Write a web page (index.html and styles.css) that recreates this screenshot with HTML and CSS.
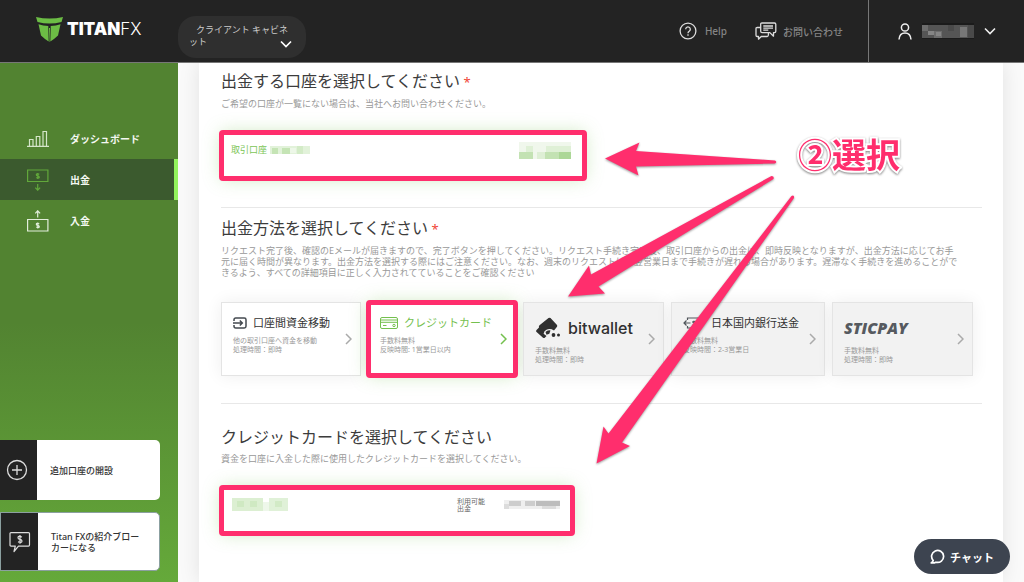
FILE: index.html
```html
<!DOCTYPE html>
<html lang="ja">
<head>
<meta charset="utf-8">
<meta name="viewport" content="width=device-width, initial-scale=1">
<title>Titan FX - 出金</title>
<link rel="stylesheet" href="styles.css">
</head>
<body>
<header class="topbar">
  <a class="logo" href="#" aria-label="Titan FX">
    <svg class="logo-mark" viewBox="0 0 27 25" width="27" height="25" fill="#6cbd45" aria-hidden="true">
      <path d="M0 0Q13.500 3 27 0L25.500 5Q13.500 8 1.500 5Z"/>
      <path d="M2.500 7.300Q7 8.800 12.300 9V11L12.700 24.500Q8 21.500 5 18.500Z"/>
      <path d="M24.500 7.300Q20 8.800 14.700 9V11L14.300 24.500Q19 21.500 22 18.500Z"/>
      <path d="M13 11h1l-.3 14h-.4Z"/>
    </svg>
    <span class="logo-text"><b>TITAN</b>FX</span>
  </a>
  <button class="cabinet" type="button" aria-haspopup="menu">
    <span>クライアント キャビネット</span>
    <svg viewBox="0 0 12 8" width="12" height="8" fill="none" stroke="#fff" stroke-width="1.700" aria-hidden="true"><path d="M1 1.500l5 5 5-5"/></svg>
  </button>
  <nav class="toplinks" aria-label="サポート">
    <a class="toplink" href="#">
      <svg viewBox="0 0 18 18" width="18" height="18" fill="none" stroke="#ddd" stroke-width="1.300" aria-hidden="true"><circle cx="9" cy="9" r="7.900"/><path d="M6.700 7.200a2.300 2.300 0 1 1 3.500 2c-.8.500-1.200.9-1.200 2"/><path d="M9 12.300v1.500"/></svg>
      <span>Help</span>
    </a>
    <a class="toplink contact" href="#">
      <svg viewBox="0 0 22 18" width="22" height="18" fill="none" stroke="#ddd" stroke-width="1.300" stroke-linejoin="round" aria-hidden="true"><path d="M7 1h12.500q1.300 0 1.300 1.300v7q0 1.300-1.300 1.300h-1v3.600l-3.600-3.600H7q-1.300 0-1.300-1.300v-7Q5.700 1 7 1Z"/><path d="M8.300 4h9.700M8.300 6.200h9.700M8.300 8.200h5"/><path d="M5.500 5.500H2.200Q1 5.500 1 6.700v6.600q0 1.200 1.200 1.200h1.300v2.700l2.700-2.700h6q1 0 1.200-1.500v-2.300"/></svg>
      <span>お問い合わせ</span>
    </a>
  </nav>
  <button class="user" type="button" aria-haspopup="menu" aria-label="アカウントメニュー">
    <svg viewBox="0 0 14 17" width="14" height="17" fill="none" stroke="#eee" stroke-width="1.500" aria-hidden="true"><circle cx="7" cy="4.500" r="3.600"/><path d="M1 16.500c.3-4.600 2.500-6.600 6-6.600s5.700 2 6 6.600"/></svg>
    <svg class="user-name" viewBox="0 0 52 16" width="52" height="16" aria-hidden="true">
      <rect width="52" height="16" fill="#1b1b1b"/><rect y="2" width="52" height="13" fill="#555"/>
      <path fill="#6d6d6d" d="M0 2h6v6H0zM12 8h8v7h-8z"/><path fill="#858585" d="M6 8h6v4H6zM14 9h5v4h-5z"/><path fill="#777" d="M38 4h7v10h-7z"/><path fill="#4a4a4a" d="M26 2h6v6h-6zM46 2h6v13h-6z"/>
    </svg>
    <svg viewBox="0 0 12 8" width="12" height="8" fill="none" stroke="#eee" stroke-width="1.600" aria-hidden="true"><path d="M1 1.500l5 5 5-5"/></svg>
  </button>
</header>

<div class="page">
  <aside class="sidebar">
    <nav class="menu" aria-label="メインメニュー">
      <a class="menu-item" href="#">
        <svg viewBox="0 0 22 22" width="22" height="22" fill="none" stroke="#d5e6c9" stroke-width="1.200" aria-hidden="true"><path d="M0 18.400h22M2.500 18v-6.500h3.500V18M9.300 18V8.500h3.500V18M16 18V3.500h3.500V18"/></svg>
        <span>ダッシュボード</span>
      </a>
      <a class="menu-item active" href="#" aria-current="page">
        <svg viewBox="0 0 22 22" width="22" height="22" fill="none" stroke="#62a83b" stroke-width="1.200" aria-hidden="true"><path d="M.6 1h20.300v11.500H.6zM10.700 15v6M8.300 18.600l2.400 2.600 2.400-2.600"/><path d="M12.300 5.200q-3-1-3 .5 0 1 1.500 1.200 1.500.3 1.500 1.300 0 1.200-3 .5M10.800 4v6"/></svg>
        <span>出金</span>
      </a>
      <a class="menu-item" href="#">
        <svg viewBox="0 0 22 22" width="22" height="22" fill="none" stroke="#e2eedb" stroke-width="1.200" aria-hidden="true"><path d="M.6 9.500h20.300V21H.6zM10.700 7.500V1M8.300 3.400l2.400-2.600 2.400 2.600"/><path d="M12.300 13.700q-3-1-3 .5 0 1 1.500 1.200 1.500.3 1.500 1.300 0 1.200-3 .5M10.800 12.500v6"/></svg>
        <span>入金</span>
      </a>
    </nav>
    <div class="shortcuts">
      <a class="shortcut" href="#">
        <span class="shortcut-icon"><svg viewBox="0 0 22 22" width="22" height="22" fill="none" stroke="#ddd" stroke-width="1.300" aria-hidden="true"><circle cx="11" cy="11" r="9.500"/><path d="M11 6v10M6 11h10"/></svg></span>
        <span class="shortcut-label">追加口座の開設</span>
      </a>
      <a class="shortcut outlined" href="#">
        <span class="shortcut-icon"><svg viewBox="0 0 22 22" width="22" height="22" fill="none" stroke="#ddd" stroke-width="1.200" stroke-linejoin="round" aria-hidden="true"><path d="M2 1.600h17.500q1 0 1 1v11.500q0 1-1 1H9.500L5 20.500l1.300-5.400H2q-1 0-1-1V2.600q0-1 1-1Z"/><path d="M13 6q-4-1.500-4 .7 0 1.300 2 1.700 2 .4 2 1.700 0 2-4 .8M11 4v8.800"/></svg></span>
        <span class="shortcut-label">Titan FXの紹介ブローカーになる</span>
      </a>
    </div>
  </aside>

  <main class="content">
    <div class="sheet">
      <section class="step">
        <h2>出金する口座を選択してください<span class="req"> *</span></h2>
        <p class="hint">ご希望の口座が一覧にない場合は、当社へお問い合わせください。</p>
        <button class="field marked" type="button">
          <span class="account">取引口座
            <svg viewBox="0 0 40 10" width="40" height="10" aria-hidden="true"><path fill="#e2f2da" d="M0 1h40v8H0z"/><path fill="#c5e4b5" d="M2 3h6v6H2zM12 3h8v6h-8z"/><path fill="#d3ebc7" d="M27 1h6v8h-6z"/><path fill="#edf7e8" d="M20 3h6v5h-6z"/></svg>
          </span>
          <svg class="balance" viewBox="0 0 52 17" width="52" height="17" aria-hidden="true"><path fill="#f0f7ec" d="M0 0h52v17H0z"/><path fill="#dff0d6" d="M7 4h7v6H7zM27 4h25v6H27z"/><path fill="#c3e2b3" d="M0 10h14v7H0zM26 10h14v7H26z"/><path fill="#acd797" d="M40 10h12v7H40z"/><path fill="#deefd5" d="M18 10h8v7h-8z"/></svg>
        </button>
      </section>

      <section class="step">
        <h2>出金方法を選択してください<span class="req"> *</span></h2>
        <p class="notice">リクエスト完了後、確認のEメールが届きますので、完了ボタンを押してください。リクエスト手続き完了後、取引口座からの出金は、即時反映となりますが、出金方法に応じてお手<br>元に届く時間が異なります。出金方法を選択する際にはご注意ください。なお、週末のリクエストは、翌営業日まで手続きが遅れる場合があります。遅滞なく手続きを進めることがで<br>きるよう、すべての詳細項目に正しく入力されてていることをご確認ください</p>
        <div class="methods">
          <button class="method" type="button">
            <span class="method-body">
              <span class="method-title">
                <svg viewBox="0 0 14 12" width="14" height="12" fill="none" stroke="#444a50" stroke-width="1.500" aria-hidden="true"><path d="M1 4V2.700Q1 1 2.700 1h8.600Q13 1 13 2.700v6.600q0 1.700-1.700 1.700H2.700Q1 11 1 9.300V8M0 6h9M6.800 3.500L9.300 6 6.800 8.500"/></svg>
                口座間資金移動
              </span>
              <span class="method-note">他の取引口座へ資金を移動<br>処理時間：即時</span>
            </span>
            <svg class="chev" viewBox="0 0 7 12" width="7" height="12" aria-hidden="true"><path d="M1 1l5 5-5 5"/></svg>
          </button>
          <button class="method selected marked" type="button" aria-pressed="true">
            <span class="method-body">
              <span class="method-title">
                <svg viewBox="0 0 18 12" width="18" height="12" fill="none" stroke="#74c04e" aria-hidden="true"><rect x=".5" y=".5" width="17" height="11" rx="1.500"/><path d="M1 3h16M1 5.300h16M3 8.500h3.500"/><circle cx="14" cy="8.500" r="1.200"/></svg>
                クレジットカード
              </span>
              <span class="method-note">手数料無料<br>反映時間: 1営業日以内</span>
            </span>
            <svg class="chev" viewBox="0 0 7 12" width="7" height="12" aria-hidden="true"><path d="M1 1l5 5-5 5"/></svg>
          </button>
          <button class="method muted" type="button">
            <span class="method-body">
              <span class="method-brand bitwallet">
                <svg viewBox="0 0 26 22" width="26" height="22" fill="#303030" aria-hidden="true"><path d="M13.500 1Q14.500.3 15.500 1L22 8Q22.500 9 22 9.800L19 13.500Q15 11 11.500 12.800 9 14 8.600 16.800L11.500 19 9.800 20.800Q9 21.300 8 20.700L1.300 14.800Q.7 14 1.500 13L4 10.500Q3.500 9 4.500 8.300Z"/><path d="M10.500 15q1.800-2.200 5-1.600l-1.200 3.300-2.800 1Z"/><circle cx="18.500" cy="18" r="1.900"/><circle cx="23.500" cy="18" r="1.500"/></svg>
                bitwallet
              </span>
              <span class="method-note">手数料無料<br>処理時間：即時</span>
            </span>
            <svg class="chev" viewBox="0 0 7 12" width="7" height="12" aria-hidden="true"><path d="M1 1l5 5-5 5"/></svg>
          </button>
          <button class="method muted" type="button">
            <span class="method-body">
              <span class="method-title bank">
                <svg viewBox="0 0 22 12" width="22" height="12" fill="none" stroke="#50555a" stroke-width="1.200" aria-hidden="true"><path d="M4.500 3V1h13v2M4.500 9v2h13V9M7.500 6H1M3.500 3.500L1 6l2.500 2.500M14.500 6H21M18.500 3.500L21 6l-2.500 2.500"/><path d="M12.200 4.500q-2.400-.6-2.400.4 0 .8 1.200 1 1.200.2 1.200 1 0 1.100-2.400.6"/></svg>
                日本国内銀行送金
              </span>
              <span class="method-note">手数料無料<br>反映時間：2-3営業日</span>
            </span>
            <svg class="chev" viewBox="0 0 7 12" width="7" height="12" aria-hidden="true"><path d="M1 1l5 5-5 5"/></svg>
          </button>
          <button class="method muted" type="button">
            <span class="method-body">
              <span class="method-brand sticpay">STICPAY</span>
              <span class="method-note">手数料無料<br>処理時間：即時</span>
            </span>
            <svg class="chev" viewBox="0 0 7 12" width="7" height="12" aria-hidden="true"><path d="M1 1l5 5-5 5"/></svg>
          </button>
        </div>
      </section>

      <section class="step card-step">
        <h2>クレジットカードを選択してください</h2>
        <p class="hint">資金を口座に入金した際に使用したクレジットカードを選択してください。</p>
        <button class="field card-field marked" type="button">
          <svg viewBox="0 0 57 13" width="57" height="13" aria-label="カード番号" role="img"><path fill="#dcefd2" d="M1 0h31v13H1z"/><path fill="#cfe9c2" d="M6 3h7v6H6zM19 3h7v6h-7z"/><path fill="#eef7ea" d="M32 4h8v9h-8z"/><path fill="#e0f1d8" d="M38 0h19v13H38z"/><path fill="#d2eac6" d="M44 3h7v6h-7z"/></svg>
          <span class="available">利用可能<br>出金</span>
          <svg viewBox="0 0 56 13" width="56" height="13" aria-hidden="true"><path fill="#efefef" d="M0 2h56v9H0z"/><path fill="#cdcdcd" d="M5 3h12v5H5zM21 3h10v5H21z"/><path fill="#bdbdbd" d="M32 3h24v5H32z"/><path fill="#dcdcdc" d="M0 6h5v5H0zM38 8h14v3H38z"/></svg>
        </button>
      </section>
    </div>
  </main>
</div>

<button class="chat" type="button">
  <svg viewBox="0 0 15 15" width="15" height="15" fill="none" stroke="#fff" stroke-width="1.700" stroke-linejoin="round" aria-hidden="true"><path d="M3.200 11.500A6 6 0 1 1 6 13.200Q4 14.200 1.200 13.900 2.800 13 3.200 11.500Z"/></svg>
  <span>チャット</span>
</button>

<svg class="arrows" viewBox="0 0 1024 582" width="1024" height="582" fill="#ff2e6d" aria-hidden="true">
  <path d="M605 158.500L639.500 142.500 636 151 775 160.500Q777.500 162 775 163.500L636 166.500 638.500 175.500Z"/>
  <path d="M568 296.500L589 265.500 591 274.500 771.500 176Q774.500 176 773.500 179L598.500 286.500 605 293.500Z"/>
  <path d="M596.500 463.500L603.500 426.500 608.500 433.500 791.500 196Q794.500 194.500 794 198L622 442.500 630 446Z"/>
</svg>
<p class="callout">②選択</p>
</body>
</html>
```
FILE: styles.css
```css
* {
  box-sizing: border-box;
}

body {
  margin: 0;
  min-height: 100vh;
  position: relative;
  display: flex;
  flex-direction: column;
  font-family: "Noto Sans", "Noto Sans CJK JP", sans-serif;
  font-size: 9px;
  color: #444;
}

button {
  margin: 0;
  padding: 0;
  border: 0;
  background: none;
  color: inherit;
  font: inherit;
  text-align: left;
  cursor: pointer;
}

a {
  color: inherit;
  text-decoration: none;
}

h2,
p {
  margin: 0;
}

svg {
  display: block;
  flex: none;
}

/* Top bar */

.topbar {
  height: 63px;
  display: flex;
  align-items: stretch;
  background: #232323;
  border-bottom: 1px solid #777;
}

.logo {
  width: 178px;
  padding: 17px 0 0 36px;
  display: flex;
  align-items: flex-start;
  gap: 4px;
}

.logo-text {
  color: #fff;
  font-family: Inter, sans-serif;
  font-size: 17px;
  line-height: 24px;
  font-weight: 300;
}

.logo-text b {
  font-weight: 900;
}

.cabinet {
  width: 128px;
  height: 42px;
  margin-top: 16px;
  padding: 8px 14px 0 11px;
  position: relative;
  display: flex;
  align-items: flex-start;
  border-radius: 18px;
  background: #2f2f2f;
  color: #ccc;
  line-height: 12px;
  text-indent: 7px;
}

.cabinet svg {
  position: absolute;
  right: 14px;
  bottom: 10px;
}

.toplinks {
  margin-left: auto;
  padding-right: 25px;
  display: flex;
  align-items: center;
  gap: 28px;
}

.toplink {
  display: flex;
  align-items: center;
  gap: 8px;
  color: #858585;
  font-size: 10px;
  font-weight: 500;
}

.contact {
  gap: 6px;
}

.user {
  width: 156px;
  padding-left: 29px;
  display: flex;
  align-items: center;
  gap: 10px;
  border-left: 1px solid #777;
}

/* Page frame */

.page {
  flex: 1;
  display: flex;
}

.sidebar {
  width: 178px;
  flex: none;
  padding: 55px 0 11px;
  display: flex;
  flex-direction: column;
  justify-content: space-between;
  background: linear-gradient(#528331, #528331 50%, #65a93a);
}

.menu-item {
  height: 41px;
  padding-left: 27px;
  display: flex;
  align-items: center;
  gap: 21px;
  color: #f4f8f1;
  font-size: 10px;
  font-weight: 700;
}

.menu-item.active {
  background: #3b5a2e;
  border-right: 4px solid #92f45c;
}

.shortcuts {
  display: flex;
  flex-direction: column;
  gap: 12px;
}

.shortcut {
  width: 160px;
  height: 60px;
  display: flex;
  overflow: hidden;
  border-radius: 0 5px 5px 0;
  background: #fff;
  color: #333;
  line-height: 11px;
  font-weight: 500;
}

.shortcut.outlined {
  height: 59px;
  border: 1px solid #8ba0a0;
}

.shortcut-icon {
  width: 37px;
  flex: none;
  padding-right: 3px;
  display: grid;
  place-items: center;
  background: #232323;
}

.outlined .shortcut-icon {
  padding-right: 0;
}

.shortcut-label {
  padding: 0 12px 0 13px;
  align-self: center;
}

.content {
  flex: 1;
  min-width: 0;
  padding: 0 21px;
  display: flex;
  background: #fafafa;
}

.sheet {
  flex: 1;
  min-width: 0;
  padding: 0 21px 20px 22px;
  background: #fff;
  box-shadow: 0 0 20px rgba(0, 0, 0, 0.1);
  clip-path: inset(0 -21px);
}

/* Steps */

.step {
  padding: 6px 0 26px;
  border-bottom: 1px solid #e8e8e8;
}

.step + .step {
  padding: 8px 0 27px;
}

.step.card-step {
  padding: 21px 0 0;
  border-bottom: 0;
}

h2 {
  font-size: 16px;
  line-height: 24px;
  font-weight: 400;
  color: #3c3c3c;
}

.req {
  font-size: 13px;
  color: #f04438;
}

.hint {
  margin-top: 4px;
  line-height: 12px;
  color: #999;
}

.notice {
  margin-top: 4px;
  line-height: 11px;
  color: #999;
  white-space: nowrap;
}

.field {
  width: 100%;
  max-width: 364px;
  height: 47px;
  margin-top: 22px;
  padding: 10px 14px 0 10px;
  display: flex;
  align-items: flex-start;
  background: #fff;
  box-shadow: 0 0 18px rgba(116, 192, 78, 0.35);
}

.step:first-child .field {
  margin-bottom: 2px;
}

.marked {
  outline: 5px solid #ff2e6d;
  outline-offset: -3px;
  border-radius: 2px;
}

.account {
  display: flex;
  align-items: center;
  gap: 3px;
  padding-top: 2px;
  line-height: 12px;
  color: #7cc557;
}

.balance {
  margin-left: auto;
}

.card-field {
  max-width: 352px;
  padding: 11px 13px 0 10px;
}

.available {
  margin-left: auto;
  margin-right: 19px;
  font-size: 7px;
  line-height: 7px;
  color: #666;
}

/* Payment methods */

.methods {
  margin-top: 24px;
  margin-right: 9px;
  display: grid;
  grid-template-columns: 140fr 148fr 141fr 154fr 141fr;
  gap: 7px;
}

.method {
  min-width: 0;
  height: 74px;
  padding: 12px 8px 0 11px;
  display: flex;
  justify-content: space-between;
  border: 1px solid #e4e4e4;
  background: #fff;
  box-shadow: 0 0 16px rgba(0, 0, 0, 0.07);
  white-space: nowrap;
}

.method.muted {
  background: #f2f2f2;
}

.method.selected {
  box-shadow: 0 0 18px rgba(116, 192, 78, 0.35);
}

.method-body {
  display: flex;
  flex-direction: column;
  gap: 5px;
}

.method-title {
  display: flex;
  align-items: center;
  gap: 6px;
  font-size: 11px;
  line-height: 16px;
  color: #333;
}

.selected .method-title {
  color: #74c04e;
}

.method-brand {
  height: 26px;
  display: flex;
  align-items: center;
}

.bitwallet {
  gap: 7px;
  font-family: Inter, sans-serif;
  font-size: 16px;
  font-weight: 500;
  color: #303030;
}

.sticpay {
  font-family: "Open Sans", sans-serif;
  font-size: 16px;
  font-style: italic;
  font-weight: 800;
  color: #565a60;
}

.method-note {
  font-size: 7px;
  line-height: 9px;
  color: #999;
}

.chev {
  margin-top: 18px;
  fill: none;
  stroke: #aaa;
  stroke-width: 1.500px;
}

.selected .chev {
  stroke: #74c04e;
}

/* Floating layers */

.chat {
  position: fixed;
  right: 14px;
  bottom: 8px;
  width: 96px;
  height: 35px;
  display: flex;
  align-items: center;
  justify-content: center;
  gap: 5px;
  border-radius: 18px;
  background: #3d4450;
  color: #fff;
  font-size: 11px;
  font-weight: 700;
}

.arrows {
  position: absolute;
  top: 0;
  left: 0;
  pointer-events: none;
  filter: drop-shadow(0 1px 1px rgba(0, 0, 0, 0.4));
}

.callout {
  position: absolute;
  top: 134px;
  left: 798px;
  font-size: 34px;
  line-height: 40px;
  font-weight: 700;
  font-family: "Noto Sans CJK JP", sans-serif;
  color: #ff2e6d;
  -webkit-text-stroke: 4px #fff;
  paint-order: stroke fill;
  filter: drop-shadow(0 1px 1px rgba(0, 0, 0, 0.5));
}
```
